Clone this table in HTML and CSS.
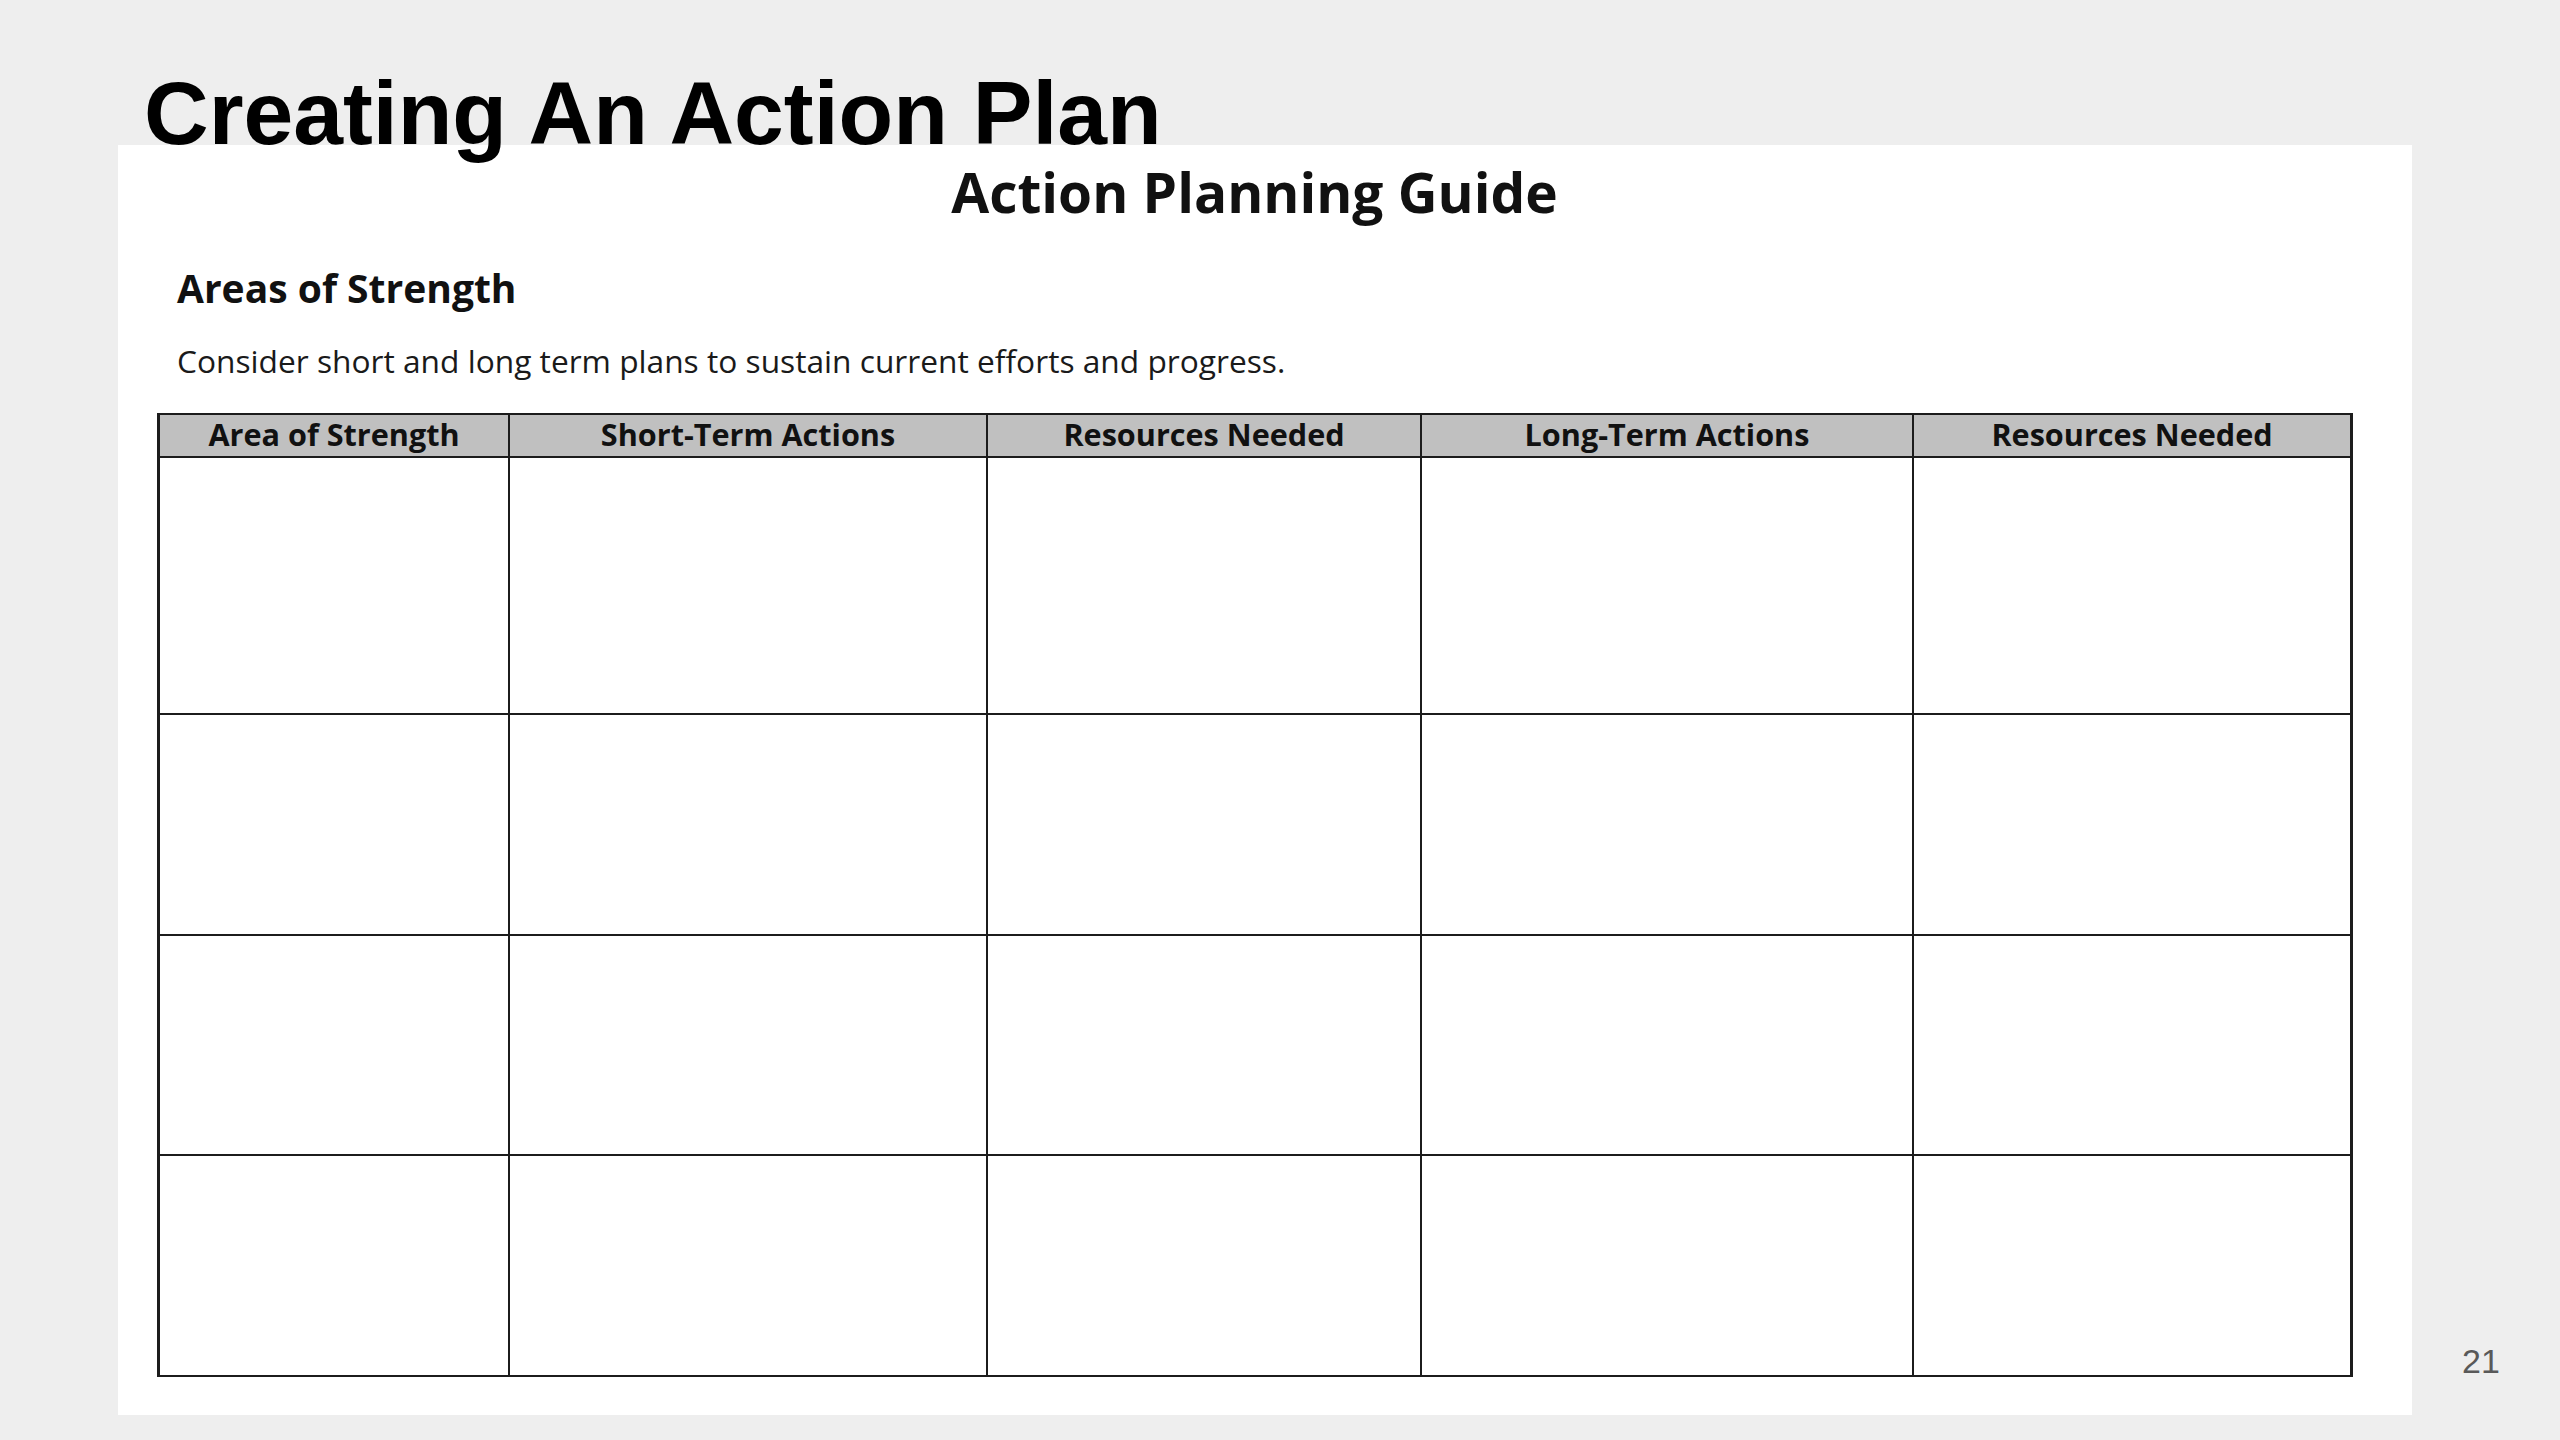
FILE: index.html
```html
<!DOCTYPE html>
<html lang="en">
<head>
<meta charset="utf-8">
<title>Creating An Action Plan</title>
<link rel="stylesheet" href="styles.css">
</head>
<body>
<div class="slide">
  <h1 class="slide-title">Creating An Action Plan</h1>
  <div class="slide-body">
    <div class="doc">
      <h2 class="doc-title">Action Planning Guide</h2>
      <h3 class="doc-section">Areas of Strength</h3>
      <p class="doc-text">Consider short and long term plans to sustain current efforts and progress.</p>
      <div class="plan-grid">
        <div class="cell head">Area of Strength</div>
        <div class="cell head">Short-Term Actions</div>
        <div class="cell head">Resources Needed</div>
        <div class="cell head">Long-Term Actions</div>
        <div class="cell head">Resources Needed</div>
        <div class="cell"></div><div class="cell"></div><div class="cell"></div><div class="cell"></div><div class="cell"></div>
        <div class="cell"></div><div class="cell"></div><div class="cell"></div><div class="cell"></div><div class="cell"></div>
        <div class="cell"></div><div class="cell"></div><div class="cell"></div><div class="cell"></div><div class="cell"></div>
        <div class="cell"></div><div class="cell"></div><div class="cell"></div><div class="cell"></div><div class="cell"></div>
      </div>
    </div>
    <div class="page-num">21</div>
  </div>
</div>
</body>
</html>
```
FILE: styles.css
```css
html, body {
  margin: 0;
  padding: 0;
}
body {
  background: #eeeeee;
  width: 2560px;
  height: 1440px;
  overflow: hidden;
}
.slide {
  padding: 68px 0 0 118px;
}
.slide-title {
  position: relative;
  z-index: 1;
  margin: 0;
  padding-left: 26px;
  height: 77px;
  font-family: "Liberation Sans", Arial, sans-serif;
  font-weight: bold;
  font-size: 89.5px;
  line-height: 91px;
  color: #000;
  white-space: nowrap;
}
.slide-body {
  display: flex;
  align-items: flex-end;
}
.doc {
  width: 2294px;
  height: 1270px;
  box-sizing: border-box;
  background: #ffffff;
  padding: 17px 0 0 39px;
  font-family: "Open Sans", Lato, sans-serif;
  color: #111;
}
.doc-title {
  width: 2195px;
  margin: 0;
  text-align: center;
  font-size: 55px;
  line-height: 60px;
  font-weight: bold;
}
.doc-section {
  margin: 42px 0 0 20px;
  font-size: 39px;
  line-height: 48px;
  font-weight: bold;
}
.doc-text {
  margin: 29px 0 0 20px;
  font-size: 31.7px;
  line-height: 40px;
  font-weight: normal;
  color: #1a1a1a;
}
.plan-grid {
  margin-top: 32px;
  display: grid;
  grid-template-columns: 350px 478px 434px 492px 439px;
  grid-template-rows: 43px 257px 221px 220px 221px;
  width: max-content;
  border-top: 2px solid #1c1c1c;
  border-left: 3px solid #1c1c1c;
}
.cell {
  border-right: 2px solid #1c1c1c;
  border-bottom: 2px solid #1c1c1c;
}
.cell:nth-child(5n) {
  border-right-width: 3px;
}
.head {
  background: #c0c0c0;
  display: flex;
  align-items: center;
  justify-content: center;
  padding-bottom: 4px;
  box-sizing: border-box;
  font-size: 30.6px;
  font-weight: bold;
  color: #111;
  white-space: nowrap;
}
.page-num {
  margin: 0 0 37px 50px;
  font-family: "Liberation Sans", Arial, sans-serif;
  font-size: 34px;
  line-height: 34px;
  color: #595959;
}
```
